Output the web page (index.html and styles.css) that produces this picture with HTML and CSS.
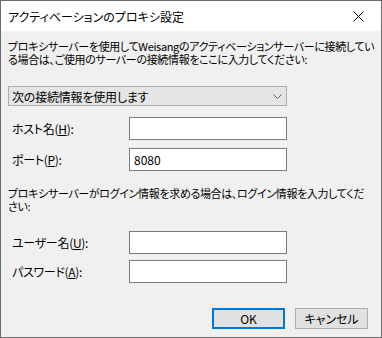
FILE: index.html
```html
<!DOCTYPE html>
<html lang="ja">
<head>
    <meta charset="UTF-8">
    <title>アクティベーションのプロキシ設定</title>
    <link rel="stylesheet" href="styles.css">
</head>
<body>

<div class="dialog">
    <div class="titlebar">
        <span class="title">アクティベーションのプロキシ設定</span>
        <span class="close">
            <svg width="11" height="11" viewBox="0 0 11 11">
                <path d="M0.5 0.5 L10.5 10.5 M10.5 0.5 L0.5 10.5" stroke="#000" stroke-width="1" fill="none"/>
            </svg>
        </span>
    </div>

    <div class="client">
        <p class="intro">プロキシサーバーを使用してWeisangのアクティベーションサーバーに接続してい<br>る場合は、ご使用のサーバーの接続情報をここに入力してください:</p>

        <div class="combo">
            <span>次の接続情報を使用します</span>
            <svg width="9" height="5" viewBox="0 0 9 5">
                <path d="M0.5 0.5 L4.5 4.5 L8.5 0.5" stroke="#606060" stroke-width="1" fill="none"/>
            </svg>
        </div>

        <div class="field-row first">
            <span class="field-label">ホスト名(<u>H</u>):</span>
            <div class="textbox"></div>
        </div>
        <div class="field-row">
            <span class="field-label">ポート(<u>P</u>):</span>
            <div class="textbox">8080</div>
        </div>

        <p class="intro login">プロキシサーバーがログイン情報を求める場合は、ログイン情報を入力してくだ<br>さい:</p>

        <div class="field-row first user">
            <span class="field-label">ユーザー名(<u>U</u>):</span>
            <div class="textbox"></div>
        </div>
        <div class="field-row pass">
            <span class="field-label">パスワード(<u>A</u>):</span>
            <div class="textbox"></div>
        </div>

        <div class="buttons">
            <button class="btn default">OK</button>
            <button class="btn">キャンセル</button>
        </div>
    </div>
</div>

</body>
</html>
```

FILE: styles.css
```css
body {
    margin: 0;
    font-family: "Noto Sans CJK JP", "Noto Sans", sans-serif;
    font-size: 12px;
    font-feature-settings: "palt";
    color: #000;
}

.dialog {
    width: 382px;
    height: 338px;
    box-sizing: border-box;
    border: 1px solid #6b6b6b;
    display: flex;
    flex-direction: column;
}

.titlebar {
    height: 30px;
    flex-shrink: 0;
    background-color: #fff;
    display: flex;
    align-items: center;
    justify-content: space-between;
    padding-left: 7px;
}

.close {
    width: 46px;
    height: 30px;
    display: flex;
    align-items: center;
    justify-content: center;
}

.client {
    flex: 1;
    background-color: #f0f0f0;
    padding: 9px 7px 0 7px;
}

.intro {
    margin: 0;
    font-size: 11px;
    letter-spacing: -0.35px;
    line-height: 13px;
    white-space: nowrap;
}

.intro.login {
    margin-top: 16px;
}

.combo {
    margin-top: 20px;
    width: 279px;
    height: 20px;
    box-sizing: border-box;
    border: 1px solid #adadad;
    background-color: #e5e5e5;
    display: flex;
    align-items: center;
    justify-content: space-between;
    padding: 0 4px 0 3px;
    letter-spacing: -0.2px;
}

.field-row {
    display: flex;
    align-items: center;
    margin-top: 8px;
}

.field-row.first {
    margin-top: 11px;
}

.field-row.user {
    margin-top: 18px;
}

.field-row.pass {
    margin-top: 6px;
}

.field-label {
    width: 121px;
    padding-left: 4px;
    box-sizing: border-box;
    letter-spacing: -0.3px;
}

.textbox {
    width: 158px;
    height: 23px;
    box-sizing: border-box;
    border: 1px solid #7a7a7a;
    background-color: #fff;
    padding: 0 4px;
    line-height: 21px;
}

.buttons {
    display: flex;
    justify-content: flex-end;
    gap: 10px;
    margin-top: 25px;
    margin-right: 6px;
}

.btn {
    width: 73px;
    height: 21px;
    box-sizing: border-box;
    border: 1px solid #adadad;
    background-color: #e1e1e1;
    font-family: inherit;
    font-size: 12px;
    font-feature-settings: "palt";
    padding: 0;
    color: #000;
}

.btn.default {
    border: 2px solid #0078d7;
}
```
